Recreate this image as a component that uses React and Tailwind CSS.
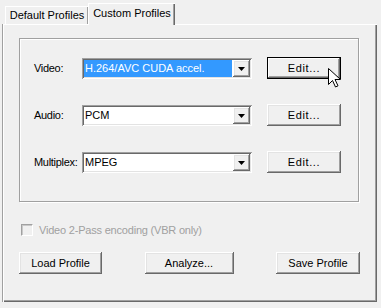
import React from 'react'

// classic 3D bevels
const raised =
  'shadow-[inset_-1px_-1px_0_#696969,inset_1px_1px_0_#ffffff,inset_-2px_-2px_0_#a0a0a0,inset_2px_2px_0_#e3e3e3]'
const sunken =
  'shadow-[inset_1px_1px_0_#a0a0a0,inset_-1px_-1px_0_#ffffff,inset_2px_2px_0_#696969,inset_-2px_-2px_0_#e3e3e3]'

function Combo({value, selected}) {
  return (
    <div className={`flex h-[21px] w-[170px] bg-white p-[2px] ${sunken}`}>
      <div
        className={`flex flex-1 items-center pl-[1px] mr-[1px] ${
          selected ? 'bg-[#3399ff] text-white' : 'text-black'
        }`}
      >
        {value}
      </div>
      <div className={`flex h-[17px] w-[17px] items-center justify-center bg-[#f0f0f0] ${raised}`}>
        <svg width="7" height="4" viewBox="0 0 7 4">
          <path d="M0 0h7L3.5 4z" fill="#000" />
        </svg>
      </div>
    </div>
  )
}

function Button({children, w, focused}) {
  return (
    <div
      className={`flex h-[22px] items-center justify-center bg-[#f0f0f0] ${w} ${
        focused
          ? 'shadow-[inset_0_0_0_1px_#000000,inset_-2px_-2px_0_#696969,inset_2px_2px_0_#ffffff,inset_-3px_-3px_0_#a0a0a0]'
          : raised
      }`}
    >
      {children}
    </div>
  )
}

function Row({label, value, selected, focused, cursor}) {
  return (
    <div className="relative flex h-[21px] items-center">
      <div className="w-[49px] pl-[1px] tracking-[-0.3px]">{label}</div>
      <Combo value={value} selected={selected} />
      <div className="ml-[15px] -mt-[1px]">
        <Button w="w-[74px]" focused={focused}>
          <span className="tracking-[0.6px]">Edit...</span>
        </Button>
      </div>
      {cursor && (
        <svg
          className="absolute left-[295px] top-[10px]"
          width="13"
          height="20"
          viewBox="0 0 13 20"
        >
          <path
            d="M0.5 0.5v16l4-4 3 6.5 2.5-1.2-3-6.3h5.5z"
            fill="#fff"
            stroke="#000"
            strokeWidth="1"
            strokeLinejoin="miter"
          />
        </svg>
      )}
    </div>
  )
}

export default function App() {
  return (
    <div
      className="h-[308px] w-[381px] overflow-hidden bg-[#f0f0f0] text-[11px] leading-none text-black"
      style={{fontFamily: '"Liberation Sans", Arial, sans-serif'}}
    >
      {/* tabs */}
      <div className="flex items-end pl-[5px] pt-[3px] h-[24px]">
        <div className="flex h-[18px] w-[83px] items-center justify-center border-l border-t border-white shadow-[inset_-1px_0_0_#a0a0a0]">
          Default Profiles
        </div>
        <div className="relative z-10 -mb-[1px] flex h-[22px] w-[87px] items-center justify-center border-l border-t border-white bg-[#f0f0f0] pb-[2px] shadow-[inset_-1px_0_0_#696969,inset_-2px_0_0_#a0a0a0]">
          Custom Profiles
        </div>
      </div>

      {/* tab panel */}
      <div className="ml-[3px] h-[278px] w-[374px] border-l border-t border-white shadow-[inset_-1px_-1px_0_#696969,inset_-2px_-2px_0_#a0a0a0,-1px_0_0_#a0a0a0] pl-[15px] pt-[13px]">
        {/* group box */}
        <div className="flex h-[164px] w-[340px] flex-col gap-[26px] border border-[#a0a0a0] pl-[13px] pt-[19px] shadow-[1px_1px_0_#ffffff,inset_1px_1px_0_#ffffff]">
          <Row label="Video:" value="H.264/AVC CUDA accel." selected focused cursor />
          <Row label="Audio:" value="PCM" />
          <Row label="Multiplex:" value="MPEG" />
        </div>

        {/* checkbox */}
        <div className="mt-[22px] flex items-center gap-[6px] pl-[2px] text-[#a0a0a0]">
          <div className="h-[12px] w-[12px] border border-t-[#a0a0a0] border-l-[#a0a0a0] border-b-white border-r-white bg-[#f0f0f0] shadow-[inset_1px_1px_0_#c8c8c8]" />
          <span className="tracking-[-0.2px]">Video 2-Pass encoding (VBR only)</span>
        </div>

        {/* buttons */}
        <div className="mt-[16px] flex w-[341px] justify-between">
          <Button w="w-[83px]">Load Profile</Button>
          <Button w="w-[89px]">Analyze...</Button>
          <Button w="w-[84px]">Save Profile</Button>
        </div>
      </div>
    </div>
  )
}
